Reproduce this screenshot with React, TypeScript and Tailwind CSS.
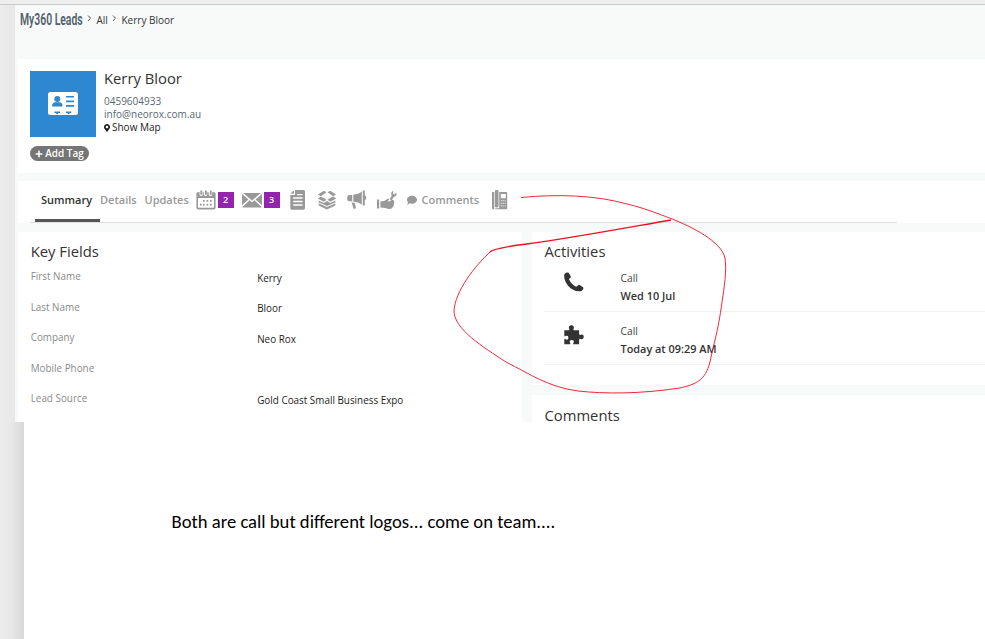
import React from "react";
import { FaComment, FaMapMarkerAlt, FaPlus } from "react-icons/fa";

const fields = [
  { label: "First Name", value: "Kerry" },
  { label: "Last Name", value: "Bloor" },
  { label: "Company", value: "Neo Rox" },
  { label: "Mobile Phone", value: "" },
  { label: "Lead Source", value: "Gold Coast Small Business Expo" },
];

function ContactCard() {
  return (
    <svg className="-mt-px" width="30" height="24" viewBox="0 0 30 24">
      <rect x="0" y="0" width="30" height="23" rx="2.5" fill="#fff" />
      <g fill="#2d87d1">
        <circle cx="9.3" cy="7" r="3" />
        <path d="M4 14.5c0-3 1.5-4.3 3.4-4.3h3.8c2 0 3.4 1.3 3.4 4.3z" />
        <path d="M18 4h8v1.6h-8zM18 8.6h8v1.6h-8zM18 13.1h8v1.6h-8zM6.5 19.5h5.5v1.4h-1.8V22H8.3v-1.1H6.5zM17.8 19.5h5.5v1.4h-1.8V22h-1.9v-1.1h-1.8z" />
      </g>
    </svg>
  );
}

function CalendarIcon() {
  return (
    <svg width="20" height="20" viewBox="0 0 20 20" fill="#999">
      <path fillRule="evenodd" d="M2 2.2h1.6V5a1.9 1.9 0 0 0 3.2 0V2.2h1V5a1.9 1.9 0 0 0 3.4 0V2.2h1.5V5a1.9 1.9 0 0 0 3.4 0V2.2H18c1 0 1.6.6 1.6 1.6v13.8c0 1.1-.6 1.8-1.7 1.8H2.1c-1.1 0-1.7-.7-1.7-1.8V3.8c0-1 .6-1.6 1.6-1.6zM2 8v9.1c0 .5.2.7.7.7h14.6c.5 0 .7-.2.7-.7V8z" />
      <path d="M4.4.4h1.8v4.3H4.4zM9 .4h1.8v4.3H9zM13.8.4h1.8v4.3h-1.8zM7 10h1.7v1.7H7zM10.5 10h1.7v1.7h-1.7zM14 10h1.7v1.7H14zM4 13.8h1.7v1.7H4zM7 13.8h1.7v1.7H7zM10.5 13.8h1.7v1.7h-1.7zM14 13.8h1.7v1.7H14z" />
    </svg>
  );
}

function MailIcon() {
  return (
    <svg width="20" height="15" viewBox="0 0 20 15" fill="#999">
      <path d="M1 0h18l-9 7.4zM0 1l6.5 5.4L0 12.2zM20 1l-6.5 5.4 6.5 5.8zM0 14.5l7.5-7.2L10 9.2l2.5-1.9 7.5 7.2z" />
    </svg>
  );
}

function DocumentIcon() {
  return (
    <svg width="16" height="20" viewBox="0 0 16 20">
      <path d="M5 0h8c1.4 0 2 .6 2 2v15.7c0 1.4-.6 2-2 2H2.3c-1.4 0-2-.6-2-2V5H5z" fill="#999" />
      <path d="M.4 3.8L4 .2v3.6z" fill="#999" />
      <path d="M7 4.6h5.5M3.2 8h9.3M3.2 11.5h9.3M3.2 15h9.3" stroke="#fff" strokeWidth="1.4" />
    </svg>
  );
}

function BoxIcon() {
  return (
    <svg width="20" height="20" viewBox="0 0 20 20" fill="#999">
      <path d="M1 4.6L6.8.8l2.6 1.4-5.6 4zM19 4.6L13.2.8l-2.6 1.4 5.6 4zM.8 8.6l3-2.1 5.8 3.2-2.8 2zM19.2 8.6l-3-2.1-5.8 3.2 2.8 2z" />
      <path d="M1.7 10.6l5.1 2.4L10 11l3.2 2 5.1-2.4v5L10 19.6l-8.3-4z" />
      <path d="M1.7 12.9L10 16.5l8.3-3.6" stroke="#fff" strokeWidth="1" fill="none" />
    </svg>
  );
}

function MegaphoneIcon() {
  return (
    <svg width="20" height="20" viewBox="0 0 20 20" fill="#999">
      <path d="M1.4 5.2L5.2 5v6.4l-3.8-.3C-.2 10.6-.2 5.7 1.4 5.2zM6.3 4.8c3.6-.2 6.4-1.4 8.5-3.2v13.2c-2.1-1.8-4.9-3-8.5-3.3zM15.8.4h2v5c1.9.5 1.9 4 0 4.6v5.6h-2zM4.6 12.5l3 .3 1.4 5.4-2.4.9z" />
    </svg>
  );
}

function ServiceIcon() {
  return (
    <svg width="20" height="20" viewBox="0 0 20 20" fill="#999">
      <path d="M0 9.6h2.2v9H0zM3.4 11.6l3.8-.5 3.6-2.4c1.1-.4 1.6.6.9 1.4l-1.2 1.2 1.6.2 3.2-1.8 1.7.9.3 1.2-.7 4.4-2.4 2.6-3.2.2-2.3-.9-5.3-.7z" />
      <path d="M12.7 9.2l2-3.6C13.6 3.7 14.2 1.4 16.2.4l-.4 3 1.4 1 2.2-1.8c.6 2.6-.7 4.3-2.9 4.6l-1.9 3.4z" />
    </svg>
  );
}

function DeskPhoneIcon() {
  return (
    <svg width="16" height="20" viewBox="0 0 16 20">
      <path d="M1 2h1.2v17.3H1a1 1 0 0 1-1-1V3a1 1 0 0 1 1-1zM2.9 1.2c0-.8.8-1.1 1.8-1.1s1.8.3 1.8 1.1v15c0 .8-.8 1.3-1.8 1.3s-1.8-.5-1.8-1.3zM7.2 2h7c.6 0 1 .4 1 1v15.3c0 .6-.4 1-1 1h-11v-1h4z" fill="#999" />
      <path d="M8.8 4h5v4.2h-5z" fill="#fff" />
      <path d="M8.8 10.7h5.2M8.8 13.3h5.2M8.8 15.9h5.2" stroke="#fff" strokeWidth="0.8" strokeDasharray="1.2 .7" />
    </svg>
  );
}

function HandsetIcon() {
  return (
    <svg width="20" height="20" viewBox="0 0 20 20" fill="#333">
      <path d="M1.2 1.2C2.3.4 4 .2 4.8 1l1.8 2.9c.6 1-.1 1.8-.9 2.4-.6.4-.8.9-.4 1.6 1.6 2.8 3.5 4.8 6.3 6.5.7.4 1.2.2 1.7-.5.6-.8 1.4-1.3 2.4-.8l3 1.8c.9.6.9 1.4.4 2.3-.9 1.8-2.8 2.3-4.5 2.1C7.4 18.8.4 12 .2 4.2.1 3 .3 2 1.2 1.2z" />
    </svg>
  );
}

function PuzzleIcon() {
  return (
    <svg width="20" height="20" viewBox="0 0 20 20" fill="#333">
      <path d="M.3 5.3H4c1.3 0 1.7-.5 1.2-1.4-.9-1.8 0-3.6 2.2-3.6s3.1 1.8 2.2 3.6c-.5.9 0 1.4 1 1.4h4.5v3.3c0 1.3.7 1.7 1.6 1.2 1.6-.9 3-.1 3 2s-1.4 3-3 2.1c-.9-.5-1.6-.1-1.6 1.2v4.1H10c-.9 0-1.1-.5-.5-1.3 1-1.5 0-2.8-1.7-2.8s-2.7 1.3-1.7 2.8c.5.8.3 1.3-.6 1.3H.3v-4.4c0-1 .6-1.2 1.3-.6 1.5 1.1 2.8.2 2.8-1.5s-1.3-2.7-2.8-1.6c-.7.6-1.3.3-1.3-.8z" />
    </svg>
  );
}

function Activity({ icon, date }: { icon: React.ReactNode; date: string }) {
  return (
    <div className="ml-3 flex h-[53px] border-b border-[#f0f1f1]">
      <div className="w-[76.5px] pl-5 pt-[13px]">{icon}</div>
      <div className="pt-[10px] text-[10.3px] leading-[18px] text-[#444]">
        <div>Call</div>
        <div className="text-[10.9px] font-semibold text-[#333]">{date}</div>
      </div>
    </div>
  );
}

export default function App() {
  return (
    <div className="relative flex h-[639px] w-[985px] flex-col overflow-hidden bg-white font-['Open_Sans',sans-serif] whitespace-nowrap">
      <div className="h-[5px] shrink-0 border-b border-[#c9c9c9] bg-[#eee]" />
      <div className="flex h-[417px] shrink-0">
        <div className="w-[15px] shrink-0 bg-linear-to-r from-[#ededed] to-[#e7e7e7]" />
        <main className="flex flex-1 flex-col bg-[#f8faf9] pl-[3px]">
          <nav className="flex h-[54px] shrink-0 items-start pl-[2px] pt-[5px] text-[10px] leading-5 text-[#333]">
            <div className="w-[67px]">
              <span className="inline-block origin-left scale-x-[0.63] font-['Roboto',sans-serif] text-[16.5px] font-semibold text-[#50606c]">My360 Leads</span>
            </div>
            <svg className="mt-[5px]" width="5" height="7" viewBox="0 0 5 7" fill="none" stroke="#555"><path d="M1 .5l2.5 2.7L1 6" /></svg>
            <span className="ml-[4.5px] w-[15.5px]">All</span>
            <svg className="mt-[5px]" width="5" height="7" viewBox="0 0 5 7" fill="none" stroke="#555"><path d="M1 .5l2.5 2.7L1 6" /></svg>
            <span className="ml-[4.5px]">Kerry Bloor</span>
          </nav>

          <section className="h-[114px] shrink-0 bg-white pl-3 pt-3">
            <div className="flex">
              <div className="flex size-[66px] items-center justify-center bg-[#2d87d1]"><ContactCard /></div>
              <div className="ml-2 text-[10px] leading-[13px] text-[#586873]">
                <div className="mb-[9px] h-[15px] text-[14.8px] leading-[15px] text-[#333]">Kerry Bloor</div>
                <div>0459604933</div>
                <div>info@neorox.com.au</div>
                <div className="flex items-center text-[#222]"><FaMapMarkerAlt className="mr-[2px] h-2 w-[6px]" />Show Map</div>
              </div>
            </div>
            <div className="mt-[9px] flex h-[15px] w-[59px] items-center justify-center rounded-full bg-[#757575] text-[10px] leading-[14px] font-semibold text-white">
              <FaPlus className="mr-[2px] size-2" /><span className="h-[15px]">Add Tag</span>
            </div>
          </section>

          <section className="mt-2 h-[42px] shrink-0 bg-white pl-3">
            <div className="flex h-[42px] w-[867px] items-stretch border-b border-[#dedfdf] text-[11px] font-semibold text-[#999]">
              <div className="ml-[5px] flex h-[41px] w-[65px] items-center border-b-[3px] border-[#555] pl-[6px] text-[#333]">Summary</div>
              <div className="flex h-[38px] items-center">
                <span className="w-[44.5px]">Details</span>
                <span className="w-[51.5px]">Updates</span>
                <CalendarIcon />
                <span className="ml-[1.5px] flex h-4 w-4 items-center justify-center bg-[#9423ae] text-[9px] text-white">2</span>
                <span className="ml-2"><MailIcon /></span>
                <span className="ml-[2px] flex h-4 w-4 items-center justify-center bg-[#9423ae] text-[9px] text-white">3</span>
                <span className="ml-[10px]"><DocumentIcon /></span>
                <span className="ml-[11px]"><BoxIcon /></span>
                <span className="ml-[10px]"><MegaphoneIcon /></span>
                <span className="ml-[10px]"><ServiceIcon /></span>
                <FaComment className="ml-[10px] size-[10px]" />
                <span className="ml-[5px] w-[70px]">Comments</span>
                <DeskPhoneIcon />
              </div>
            </div>
          </section>

          <div className="mt-[9px] flex min-h-0 flex-1 gap-[10px]">
            <section className="w-[504px] shrink-0 bg-white pl-[12.7px] pt-[9px]">
              <h2 className="h-5 text-[14.8px] leading-5 text-[#333]">Key Fields</h2>
              <div className="pt-[6px]">
                {fields.map((f) => (
                  <div key={f.label} className="flex h-[30.5px] text-[9.9px] leading-[18px]">
                    <span className="w-[226.5px] text-[#8a8a8a]">{f.label}</span>
                    <span className="pt-[1.5px] text-[#1c1c1c]">{f.value}</span>
                  </div>
                ))}
              </div>
            </section>
            <div className="flex flex-1 flex-col gap-[10px]">
              <section className="h-[153px] shrink-0 bg-white pt-[9px]">
                <h2 className="ml-[12.5px] h-5 text-[14.8px] leading-5 text-[#333]">Activities</h2>
                <div className="-mt-[2px]">
                  <Activity icon={<HandsetIcon />} date="Wed 10 Jul" />
                  <Activity icon={<PuzzleIcon />} date="Today at 09:29 AM" />
                </div>
              </section>
              <section className="h-[27px] bg-white pl-[12.5px] pt-[13px]">
                <h2 className="h-[14px] text-[14.8px] leading-[15px] text-[#333]">Comments</h2>
              </section>
            </div>
          </div>
        </main>
      </div>
      <div className="flex flex-1">
        <div className="w-6 shrink-0 bg-linear-to-r from-[#ededed] via-[#e7e7e7] to-[#d8d8d8]" />
        <p className="pl-[147.5px] pt-[88px] font-['Carlito','Lato',sans-serif] text-[18.65px] leading-6 text-black">Both are call but different logos... come on team....</p>
      </div>
      <svg className="pointer-events-none absolute inset-0" width="985" height="639" fill="none" stroke="#ee1022">
        <path strokeWidth="0.9" d="M521 197.5C557 194 595 195 627 204C644 208 656 213 671 218.5C692 227 721 241 725 258C727 270 724 289 722 302C718 332 714 342 710 362C705 381 696 384 680 388C640 394 605 394 578 391C548 387 530 374 506 362C483 347 454 329 454 311C455 291 475 266 490 252" />
        <path strokeWidth="1.4" d="M490 252C494 248 512 246 527 244C572 238 625 228 671 220" />
      </svg>
    </div>
  );
}
